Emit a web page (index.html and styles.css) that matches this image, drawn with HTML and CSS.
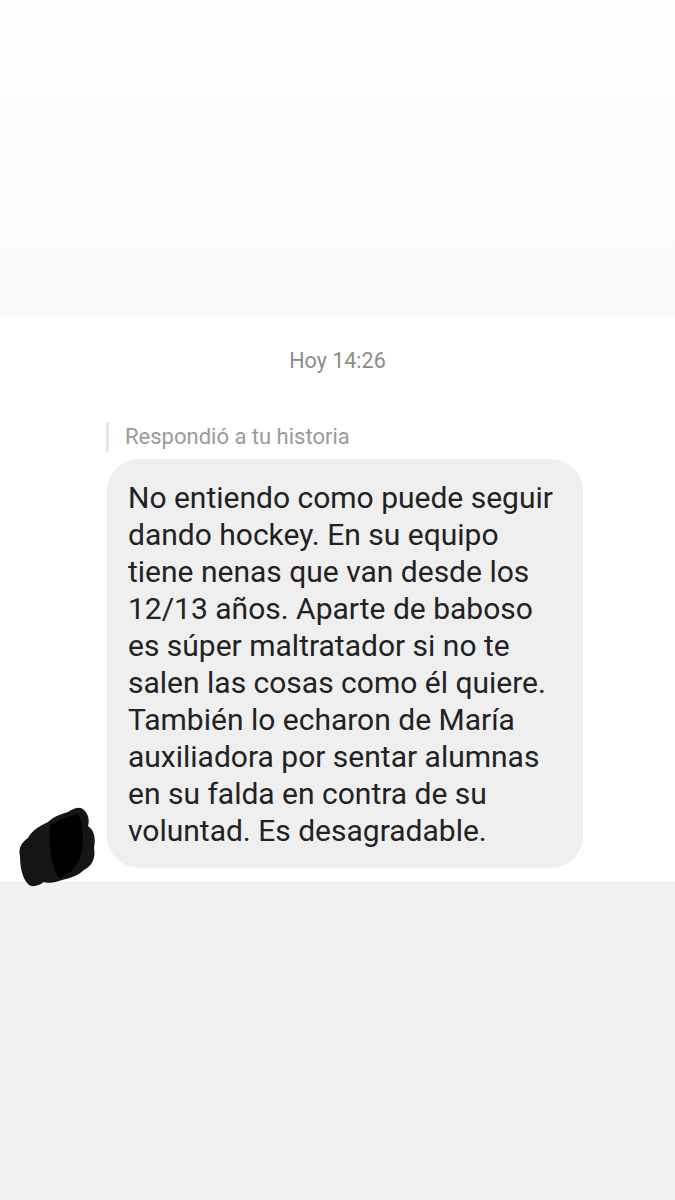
FILE: index.html
```html
<!DOCTYPE html>
<html lang="es">
<head>
<meta charset="utf-8">
<link rel="stylesheet" href="styles.css">
</head>
<body>
<div class="screen">
  <div class="top"></div>
  <div class="chat">
    <div class="stamp">Hoy 14:26</div>
    <div class="reply">Respondió a tu historia</div>
    <div class="msg-row">
      <div class="avatar">
        <svg width="80" height="86" viewBox="0 0 80 86">
          <path d="M10 36 C 14 28, 22 24, 30 20 C 36 14, 44 12, 50 10 C 56 6, 62 4, 66 8 C 70 12, 72 18, 70 24 C 76 28, 78 36, 76 46 C 78 56, 74 64, 66 68 C 60 74, 52 76, 44 78 C 38 80, 32 82, 26 80 C 20 84, 14 86, 10 82 C 4 76, 2 64, 2 54 C 0 46, 4 40, 10 36 Z" fill="#151515"/>
          <path d="M32 24 C 40 18, 50 14, 60 12 C 66 22, 66 40, 62 56 C 58 66, 50 74, 40 76 C 34 64, 30 44, 32 24 Z" fill="#000"/>
        </svg>
      </div>
      <div class="bubble">No entiendo como puede seguir<br>dando hockey. En su equipo<br>tiene nenas que van desde los<br>12/13 años. Aparte de baboso<br>es súper maltratador si no te<br>salen las cosas como él quiere.<br>También lo echaron de María<br>auxiliadora por sentar alumnas<br>en su falda en contra de su<br>voluntad. Es desagradable.</div>
    </div>
  </div>
  <div class="bottom"></div>
</div>
</body>
</html>
```

FILE: styles.css
```css
html, body {
  margin: 0;
  padding: 0;
}
body {
  font-family: Roboto, "Noto Sans", sans-serif;
  background: #f2f2f2;
}
.screen {
  width: 675px;
  height: 1200px;
  display: flex;
  flex-direction: column;
  overflow: hidden;
}
.top {
  height: 316px;
  background: linear-gradient(#fefefe, #f9f9f9);
}
.chat {
  height: 566px;
  background: #ffffff;
  display: flex;
  flex-direction: column;
}
.stamp {
  margin-top: 32px;
  text-align: center;
  font-size: 21.5px;
  line-height: 26px;
  color: #8c8c8c;
}
.reply {
  margin: 48px 0 0 106px;
  padding-left: 16px;
  border-left: 3px solid #e6e6e6;
  font-size: 22px;
  line-height: 30px;
  color: #9a9a9a;
}
.msg-row {
  margin-top: 7px;
  display: flex;
  align-items: flex-end;
}
.avatar {
  width: 80px;
  height: 86px;
  margin: 0 9px -20px 18px;
  position: relative;
  z-index: 1;
}
.avatar svg {
  display: block;
}
.bubble {
  width: 476px;
  box-sizing: border-box;
  padding: 20px 8px 19px 21px;
  background: #efefef;
  border-radius: 32px;
  font-size: 30px;
  line-height: 37px;
  color: #222222;
}
.bottom {
  flex: 1;
  background: #f2f2f2;
}
```
